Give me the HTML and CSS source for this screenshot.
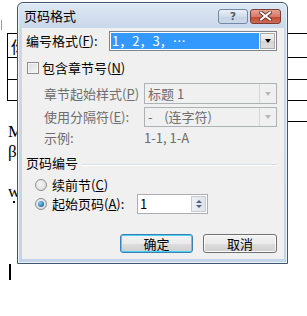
FILE: index.html
```html
<!DOCTYPE html>
<html lang="zh">
<head>
<meta charset="utf-8">
<link rel="stylesheet" href="styles.css">
</head>
<body>
<div class="doc">
  <div class="corner-mark"></div>
  <table class="tbl">
    <tr class="tr1"><td class="cell-a">你</td><td class="cell-b"></td></tr>
    <tr class="tr2"><td class="cell-a"></td><td class="cell-b"></td></tr>
    <tr class="tr3"><td class="cell-a"></td><td class="cell-b"></td></tr>
  </table>
  <div class="extra-row"></div>
  <div class="doc-text">
    <p class="ln">M</p>
    <p class="ln">β</p>
    <p class="ln"></p>
    <p class="ln">w<span class="dot"></span></p>
  </div>
  <div class="caret"></div>
</div>

<div class="dialog">
  <div class="titlebar">
    <span class="title">页码格式</span>
    <div class="caps">
      <div class="cap cap-help">?</div>
      <div class="cap cap-close">
        <svg width="13" height="10" viewBox="0 0 13 10"><path d="M2 1.5 L11 8.5 M11 1.5 L2 8.5" stroke="#5a2a22" stroke-width="3.6" stroke-linecap="square"/><path d="M2 1.5 L11 8.5 M11 1.5 L2 8.5" stroke="#ffffff" stroke-width="2" stroke-linecap="square"/></svg>
      </div>
    </div>
  </div>
  <div class="client">
    <div class="row row-fmt">
      <span class="lbl lbl-fmt">编号格式(<u>F</u>):</span>
      <div class="combo combo-fmt">
        <span class="sel">1，2，3，…</span>
        <span class="dd"><i class="arr"></i></span>
      </div>
    </div>
    <div class="row row-chk">
      <span class="chk"></span>
      <span class="lbl">包含章节号(<u>N</u>)</span>
    </div>
    <div class="row row-sub row-style">
      <span class="lbl dis lbl-sub">章节起始样式(<u>P</u>)</span>
      <div class="combo combo-dis">
        <span class="val">标题 1</span>
        <span class="dd dd-dis"><i class="arr arr-dis"></i></span>
      </div>
    </div>
    <div class="row row-sub row-sep">
      <span class="lbl dis lbl-sub">使用分隔符(<u>E</u>):</span>
      <div class="combo combo-dis">
        <span class="val">-&nbsp;&nbsp;&nbsp;&nbsp;(连字符)</span>
        <span class="dd dd-dis"><i class="arr arr-dis"></i></span>
      </div>
    </div>
    <div class="row row-sub row-ex">
      <span class="lbl dis lbl-sub">示例:</span>
      <span class="lbl dis">1-1, 1-A</span>
    </div>
    <div class="row row-grp">
      <span class="lbl">页码编号</span>
      <span class="grp-line"></span>
    </div>
    <div class="row row-r1">
      <span class="radio"></span>
      <span class="lbl">续前节(<u>C</u>)</span>
    </div>
    <div class="row row-r2">
      <span class="radio on"></span>
      <span class="lbl lbl-start">起始页码(<u>A</u>):</span>
      <div class="spin">
        <span class="val">1</span>
        <span class="spin-btns">
          <i class="sarr up"></i>
          <i class="sarr down"></i>
        </span>
      </div>
    </div>
    <div class="row row-btns">
      <div class="btn btn-default">确定</div>
      <div class="btn">取消</div>
    </div>
  </div>
</div>
</body>
</html>
```

FILE: styles.css
```css
* { box-sizing: border-box; }
html, body {
  margin: 0;
  padding: 0;
  width: 307px;
  height: 316px;
  overflow: hidden;
  background: #ffffff;
}
body {
  position: relative;
  font-family: "Noto Sans CJK SC", "Noto Sans", sans-serif;
}

/* ---------- background document ---------- */
.doc {
  padding-top: 33px;
  position: relative;
  width: 307px;
  overflow: hidden;
}
.corner-mark {
  position: absolute;
  left: 1px;
  top: 20px;
  width: 1px;
  height: 10px;
  background: #9a9a9a;
}
.tbl {
  margin-left: 7px;
  border-collapse: collapse;
  width: 301px;
}
.tbl td {
  border: 1px solid #000;
  padding: 0;
}
.tbl .cell-b { border-right: none; }
.tr1 td { height: 24px; }
.tr2 td { height: 22px; }
.tr3 td { height: 21px; }
.cell-a {
  width: 150px;
  font-family: "Noto Sans CJK SC", sans-serif;
  font-size: 16px;
  line-height: 16px;
  padding-left: 3px !important;
  vertical-align: middle;
}
.extra-row {
  margin-left: 150px;
  height: 21px;
  border-bottom: 1px solid #000;
}
.doc-text {
  padding-left: 8px;
}
.ln {
  margin: 0;
  height: 20px;
  font-family: "Liberation Serif", serif;
  font-size: 17px;
  line-height: 20px;
  color: #000;
}
.dot {
  display: inline-block;
  width: 2px;
  height: 2px;
  background: #000;
  margin-left: -7px;
  vertical-align: -6px;
}
.caret {
  margin-left: 9px;
  margin-top: 62px;
  width: 2px;
  height: 16px;
  background: #000;
}

/* ---------- dialog ---------- */
.dialog {
  position: absolute;
  left: 17px;
  top: 2px;
  width: 271px;
  height: 262px;
  border: 1px solid #3f5670;
  border-radius: 6px 6px 0 0;
  background: linear-gradient(#dfe8f3 0px, #c9d8ea 24px, #c4d4e8 100%);
  padding: 0 3px 4px 4px;
  display: flex;
  flex-direction: column;
  box-shadow: inset 0 0 0 1px #eef3f9;
}
.titlebar {
  height: 25px;
  display: flex;
  align-items: center;
  padding-left: 2px;
}
.title {
  font-size: 13px;
  line-height: 15px;
  color: #000;
}
.caps {
  margin-left: auto;
  margin-right: 3px;
  display: flex;
  gap: 2px;
  margin-top: 1px;
}
.cap {
  height: 15px;
  border-radius: 3px;
  display: flex;
  align-items: center;
  justify-content: center;
}
.cap-help {
  width: 30px;
  border: 1px solid #7189a6;
  background: linear-gradient(#e9eff6, #d3deeb 50%, #c4d2e3 51%, #ccd9e8);
  color: #4a5a70;
  font-family: "DejaVu Sans", sans-serif;
  font-weight: bold;
  font-size: 11px;
  line-height: 13px;
  text-shadow: 0 0 1px #fff;
}
.cap-close {
  width: 31px;
  border: 1px solid #7a3d33;
  background: linear-gradient(#e6a594, #d7786a 50%, #c3472f 51%, #cf6a54);
}

.client {
  flex: 1;
  background: #f0f0f0;
  padding: 0 7px 0 4px;
  display: flex;
  flex-direction: column;
  font-size: 13px;
  color: #000;
}
.row {
  display: flex;
  align-items: center;
  flex: none;
}
.lbl {
  font-size: 13px;
  line-height: 16px;
  white-space: nowrap;
}
.lbl u { text-decoration: underline; text-underline-offset: 1px; }
.dis { color: #6d6d6d; }

.row-fmt { margin-top: 3px; height: 20px; }
.lbl-fmt { width: 83px; }
.combo {
  height: 100%;
  display: flex;
  align-items: stretch;
  border: 1px solid #7f858d;
  background: #fff;
}
.combo-fmt {
  width: 168px;
  padding: 1px;
}
.sel {
  flex: 1;
  background: #3399ff;
  color: #fff;
  font-size: 13px;
  line-height: 16px;
  padding-left: 1px;
  display: flex;
  align-items: center;
}
.dd {
  width: 15px;
  margin-left: 1px;
  border: 1px solid #a9aeb5;
  background: linear-gradient(#f3f3f3, #e2e2e2 50%, #d6d6d6 51%, #dcdcdc);
  display: flex;
  align-items: center;
  justify-content: center;
}
.arr {
  width: 0;
  height: 0;
  border-left: 3.5px solid transparent;
  border-right: 3.5px solid transparent;
  border-top: 4px solid #000;
}

.row-chk { margin-top: 7px; height: 20px; }
.chk {
  width: 12px;
  height: 12px;
  margin-left: 1px;
  margin-right: 3px;
  border: 1px solid #8e8f8f;
  background: linear-gradient(135deg, #dcdcdc, #f6f6f6);
  box-shadow: inset 0 0 0 1px #f4f4f4;
}

.row-sub { padding-left: 18px; }
.lbl-sub { width: 100px; }
.row-style { margin-top: 5px; height: 21px; }
.row-sep { margin-top: 3px; height: 20px; }
.combo-dis {
  width: 133px;
  border-color: #adb2b5;
  background: #f0f0f0;
}
.val {
  flex: 1;
  font-size: 13px;
  line-height: 16px;
  color: #6d6d6d;
  padding-left: 3px;
  display: flex;
  align-items: center;
}
.dd-dis {
  width: 17px;
  margin-left: 0;
  border: none;
  border-left: 1px solid #d4d6d8;
  background: #f0f0f0;
}
.arr-dis { border-top-color: #b8b8b8; }

.row-ex { margin-top: 2px; height: 18px; }

.row-grp { margin-top: 7px; height: 18px; }
.grp-line {
  flex: 1;
  height: 2px;
  margin-left: 4px;
  margin-top: 3px;
  border-top: 1px solid #d5dfe5;
  border-bottom: 1px solid #ffffff;
}

.row-r1 { margin-top: 4px; height: 18px; padding-left: 9px; }
.row-r2 { height: 20px; padding-left: 9px; }
.radio {
  width: 12px;
  height: 12px;
  border-radius: 50%;
  border: 1px solid #8e8f8f;
  background: radial-gradient(circle at 40% 40%, #f6f6f6, #d4d4d4);
  margin-right: 5px;
  flex: none;
  display: flex;
  align-items: center;
  justify-content: center;
}
.radio.on::after {
  content: "";
  width: 6px;
  height: 6px;
  border-radius: 50%;
  background: radial-gradient(circle at 35% 35%, #8ad0f5, #1b6fb5 70%, #1a4f85);
}
.lbl-start { width: 85px; }
.spin {
  width: 71px;
  height: 20px;
  border: 1px solid #abadb3;
  background: #fff;
  display: flex;
  align-items: stretch;
}
.spin .val {
  color: #000;
  padding-left: 2px;
}
.spin-btns {
  width: 15px;
  margin: 1px;
  display: flex;
  flex-direction: column;
  border: 1px solid #c8ccd2;
  background: linear-gradient(90deg, #eef0f3, #dfe3e8);
  align-items: center;
  justify-content: space-evenly;
}
.sarr {
  width: 0;
  height: 0;
  border-left: 3px solid transparent;
  border-right: 3px solid transparent;
}
.sarr.up { border-bottom: 3px solid #4d6185; }
.sarr.down { border-top: 3px solid #4d6185; }

.row-btns {
  margin-top: 20px;
  height: 19px;
  justify-content: flex-end;
  gap: 10px;
}
.btn {
  width: 74px;
  height: 19px;
  border: 1px solid #707070;
  border-radius: 3px;
  background: linear-gradient(#f2f2f2, #ebebeb 50%, #dddddd 51%, #cfcfcf);
  box-shadow: inset 0 0 0 1px #fbfbfb;
  display: flex;
  align-items: center;
  justify-content: center;
  font-size: 13px;
  line-height: 16px;
  color: #000;
}
.btn-default {
  width: 73px;
  border-color: #3c7fb1;
  box-shadow: inset 0 0 0 1px #48d0f8;
}
```
